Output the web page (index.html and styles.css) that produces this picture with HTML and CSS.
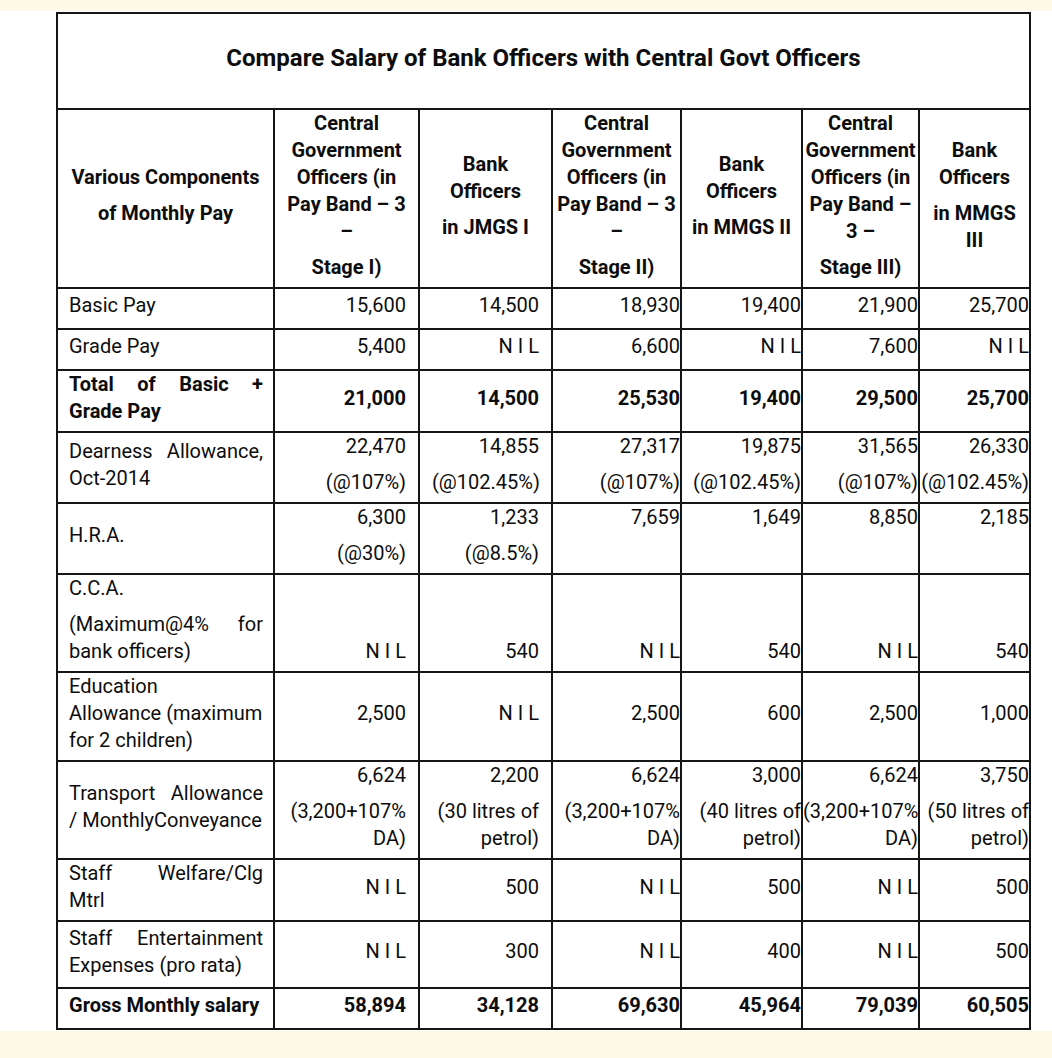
FILE: index.html
```html
<!DOCTYPE html>
<html lang="en">
<head>
    <meta charset="UTF-8">
    <meta name="viewport" content="width=device-width, initial-scale=1.0">
    <title>Compare Salary of Bank Officers with Central Govt Officers</title>
    <link rel="stylesheet" href="styles.css">
</head>
<body>
    <div class="page">
        <div class="sheet">
            <table class="salary">
                <colgroup>
                    <col class="c-label">
                    <col class="c-pb1">
                    <col class="c-jmgs">
                    <col class="c-pb2">
                    <col class="c-mmgs2">
                    <col class="c-pb3">
                    <col class="c-mmgs3">
                </colgroup>
                <tr class="title-row">
                    <th colspan="7">Compare Salary of Bank Officers with Central Govt Officers</th>
                </tr>
                <tr class="head-row">
                    <th class="pad"><p>Various Components</p><p>of Monthly Pay</p></th>
                    <th class="pad"><p>Central Government Officers (in Pay Band – 3 –</p><p>Stage I)</p></th>
                    <th class="pad"><p>Bank Officers</p><p>in JMGS I</p></th>
                    <th><p>Central Government Officers (in Pay Band – 3 –</p><p>Stage II)</p></th>
                    <th><p>Bank Officers</p><p>in MMGS II</p></th>
                    <th><p>Central Government Officers (in Pay Band – 3 –</p><p>Stage III)</p></th>
                    <th class="pad-l"><p>Bank Officers</p><p>in MMGS III</p></th>
                </tr>
                <tr>
                    <td class="label">Basic Pay</td>
                    <td class="pad">15,600</td>
                    <td class="pad">14,500</td>
                    <td>18,930</td>
                    <td>19,400</td>
                    <td>21,900</td>
                    <td>25,700</td>
                </tr>
                <tr>
                    <td class="label">Grade Pay</td>
                    <td class="pad">5,400</td>
                    <td class="pad">N I L</td>
                    <td>6,600</td>
                    <td>N I L</td>
                    <td>7,600</td>
                    <td>N I L</td>
                </tr>
                <tr class="strong">
                    <td class="label">Total of Basic + Grade Pay</td>
                    <td class="pad">21,000</td>
                    <td class="pad">14,500</td>
                    <td>25,530</td>
                    <td>19,400</td>
                    <td>29,500</td>
                    <td>25,700</td>
                </tr>
                <tr>
                    <td class="label">Dearness Allowance, Oct-2014</td>
                    <td class="pad"><p>22,470</p><p>(@107%)</p></td>
                    <td class="pad"><p>14,855</p><p>(@102.45%)</p></td>
                    <td><p>27,317</p><p>(@107%)</p></td>
                    <td><p>19,875</p><p>(@102.45%)</p></td>
                    <td><p>31,565</p><p>(@107%)</p></td>
                    <td><p>26,330</p><p>(@102.45%)</p></td>
                </tr>
                <tr class="top">
                    <td class="label">H.R.A.</td>
                    <td class="pad"><p>6,300</p><p>(@30%)</p></td>
                    <td class="pad"><p>1,233</p><p>(@8.5%)</p></td>
                    <td>7,659</td>
                    <td>1,649</td>
                    <td>8,850</td>
                    <td>2,185</td>
                </tr>
                <tr class="bottom">
                    <td class="label"><p>C.C.A.</p><p>(Maximum@4% for bank officers)</p></td>
                    <td class="pad">N I L</td>
                    <td class="pad">540</td>
                    <td>N I L</td>
                    <td>540</td>
                    <td>N I L</td>
                    <td>540</td>
                </tr>
                <tr>
                    <td class="label left">Education<br><span class="nowrap">Allowance (maximum</span> for 2 children)</td>
                    <td class="pad">2,500</td>
                    <td class="pad">N I L</td>
                    <td>2,500</td>
                    <td>600</td>
                    <td>2,500</td>
                    <td>1,000</td>
                </tr>
                <tr>
                    <td class="label">Transport Allowance / MonthlyConveyance</td>
                    <td class="pad"><p>6,624</p><p>(3,200+107% DA)</p></td>
                    <td class="pad"><p>2,200</p><p>(30 litres of petrol)</p></td>
                    <td><p>6,624</p><p>(3,200+107% DA)</p></td>
                    <td><p>3,000</p><p>(40 litres of petrol)</p></td>
                    <td><p>6,624</p><p>(3,200+107% DA)</p></td>
                    <td><p>3,750</p><p>(50 litres of petrol)</p></td>
                </tr>
                <tr>
                    <td class="label">Staff Welfare/Clg Mtrl</td>
                    <td class="pad">N I L</td>
                    <td class="pad">500</td>
                    <td>N I L</td>
                    <td>500</td>
                    <td>N I L</td>
                    <td>500</td>
                </tr>
                <tr class="tall">
                    <td class="label">Staff Entertainment Expenses (pro rata)</td>
                    <td class="pad">N I L</td>
                    <td class="pad">300</td>
                    <td>N I L</td>
                    <td>400</td>
                    <td>N I L</td>
                    <td>500</td>
                </tr>
                <tr class="strong">
                    <td class="label">Gross Monthly salary</td>
                    <td class="pad">58,894</td>
                    <td class="pad">34,128</td>
                    <td>69,630</td>
                    <td>45,964</td>
                    <td>79,039</td>
                    <td>60,505</td>
                </tr>
            </table>
        </div>
    </div>
</body>
</html>
```

FILE: styles.css
```css
body {
    margin: 0;
    background: #fef9e6;
    font-family: Roboto, "Liberation Sans", Arial, sans-serif;
    font-size: 20px;
    line-height: 27px;
    color: #0d0d0d;
}
.page {
    padding: 11px 0 27px;
}
.sheet {
    background: #fff;
    padding: 1px 0 1px 56px;
}
.salary {
    width: 973px;
    table-layout: fixed;
    border-collapse: collapse;
}
.c-label { width: 217px; }
.c-pb1 { width: 145px; }
.c-jmgs { width: 133px; }
.c-pb2 { width: 129px; }
.c-mmgs2 { width: 121px; }
.c-pb3 { width: 117px; }
.c-mmgs3 { width: 111px; }

.salary th,
.salary td {
    border: 2px solid #151515;
    padding: 0 0 6px;
    vertical-align: middle;
}
.salary tr { height: 41px; }
.salary p { margin: 0; }
.salary p + p { margin-top: 9px; }

.salary td { text-align: right; }
.salary .pad { padding-left: 12px; padding-right: 12px; }
.salary .pad-l { padding-left: 6px; padding-right: 6px; }

.title-row th {
    height: 80px;
    padding: 4px 0 10px;
    font-size: 24px;
    text-align: center;
}
.head-row th {
    text-align: center;
    font-weight: bold;
}
.salary td.label {
    text-align: justify;
    padding-left: 11px;
    padding-right: 10px;
}
.salary td.left { text-align: left; }
.nowrap { white-space: nowrap; }
.strong td { font-weight: bold; }
.top td { vertical-align: top; }
.top td.label { vertical-align: middle; }
.bottom td { vertical-align: bottom; }
.salary tr.tall { height: 67px; }
```
